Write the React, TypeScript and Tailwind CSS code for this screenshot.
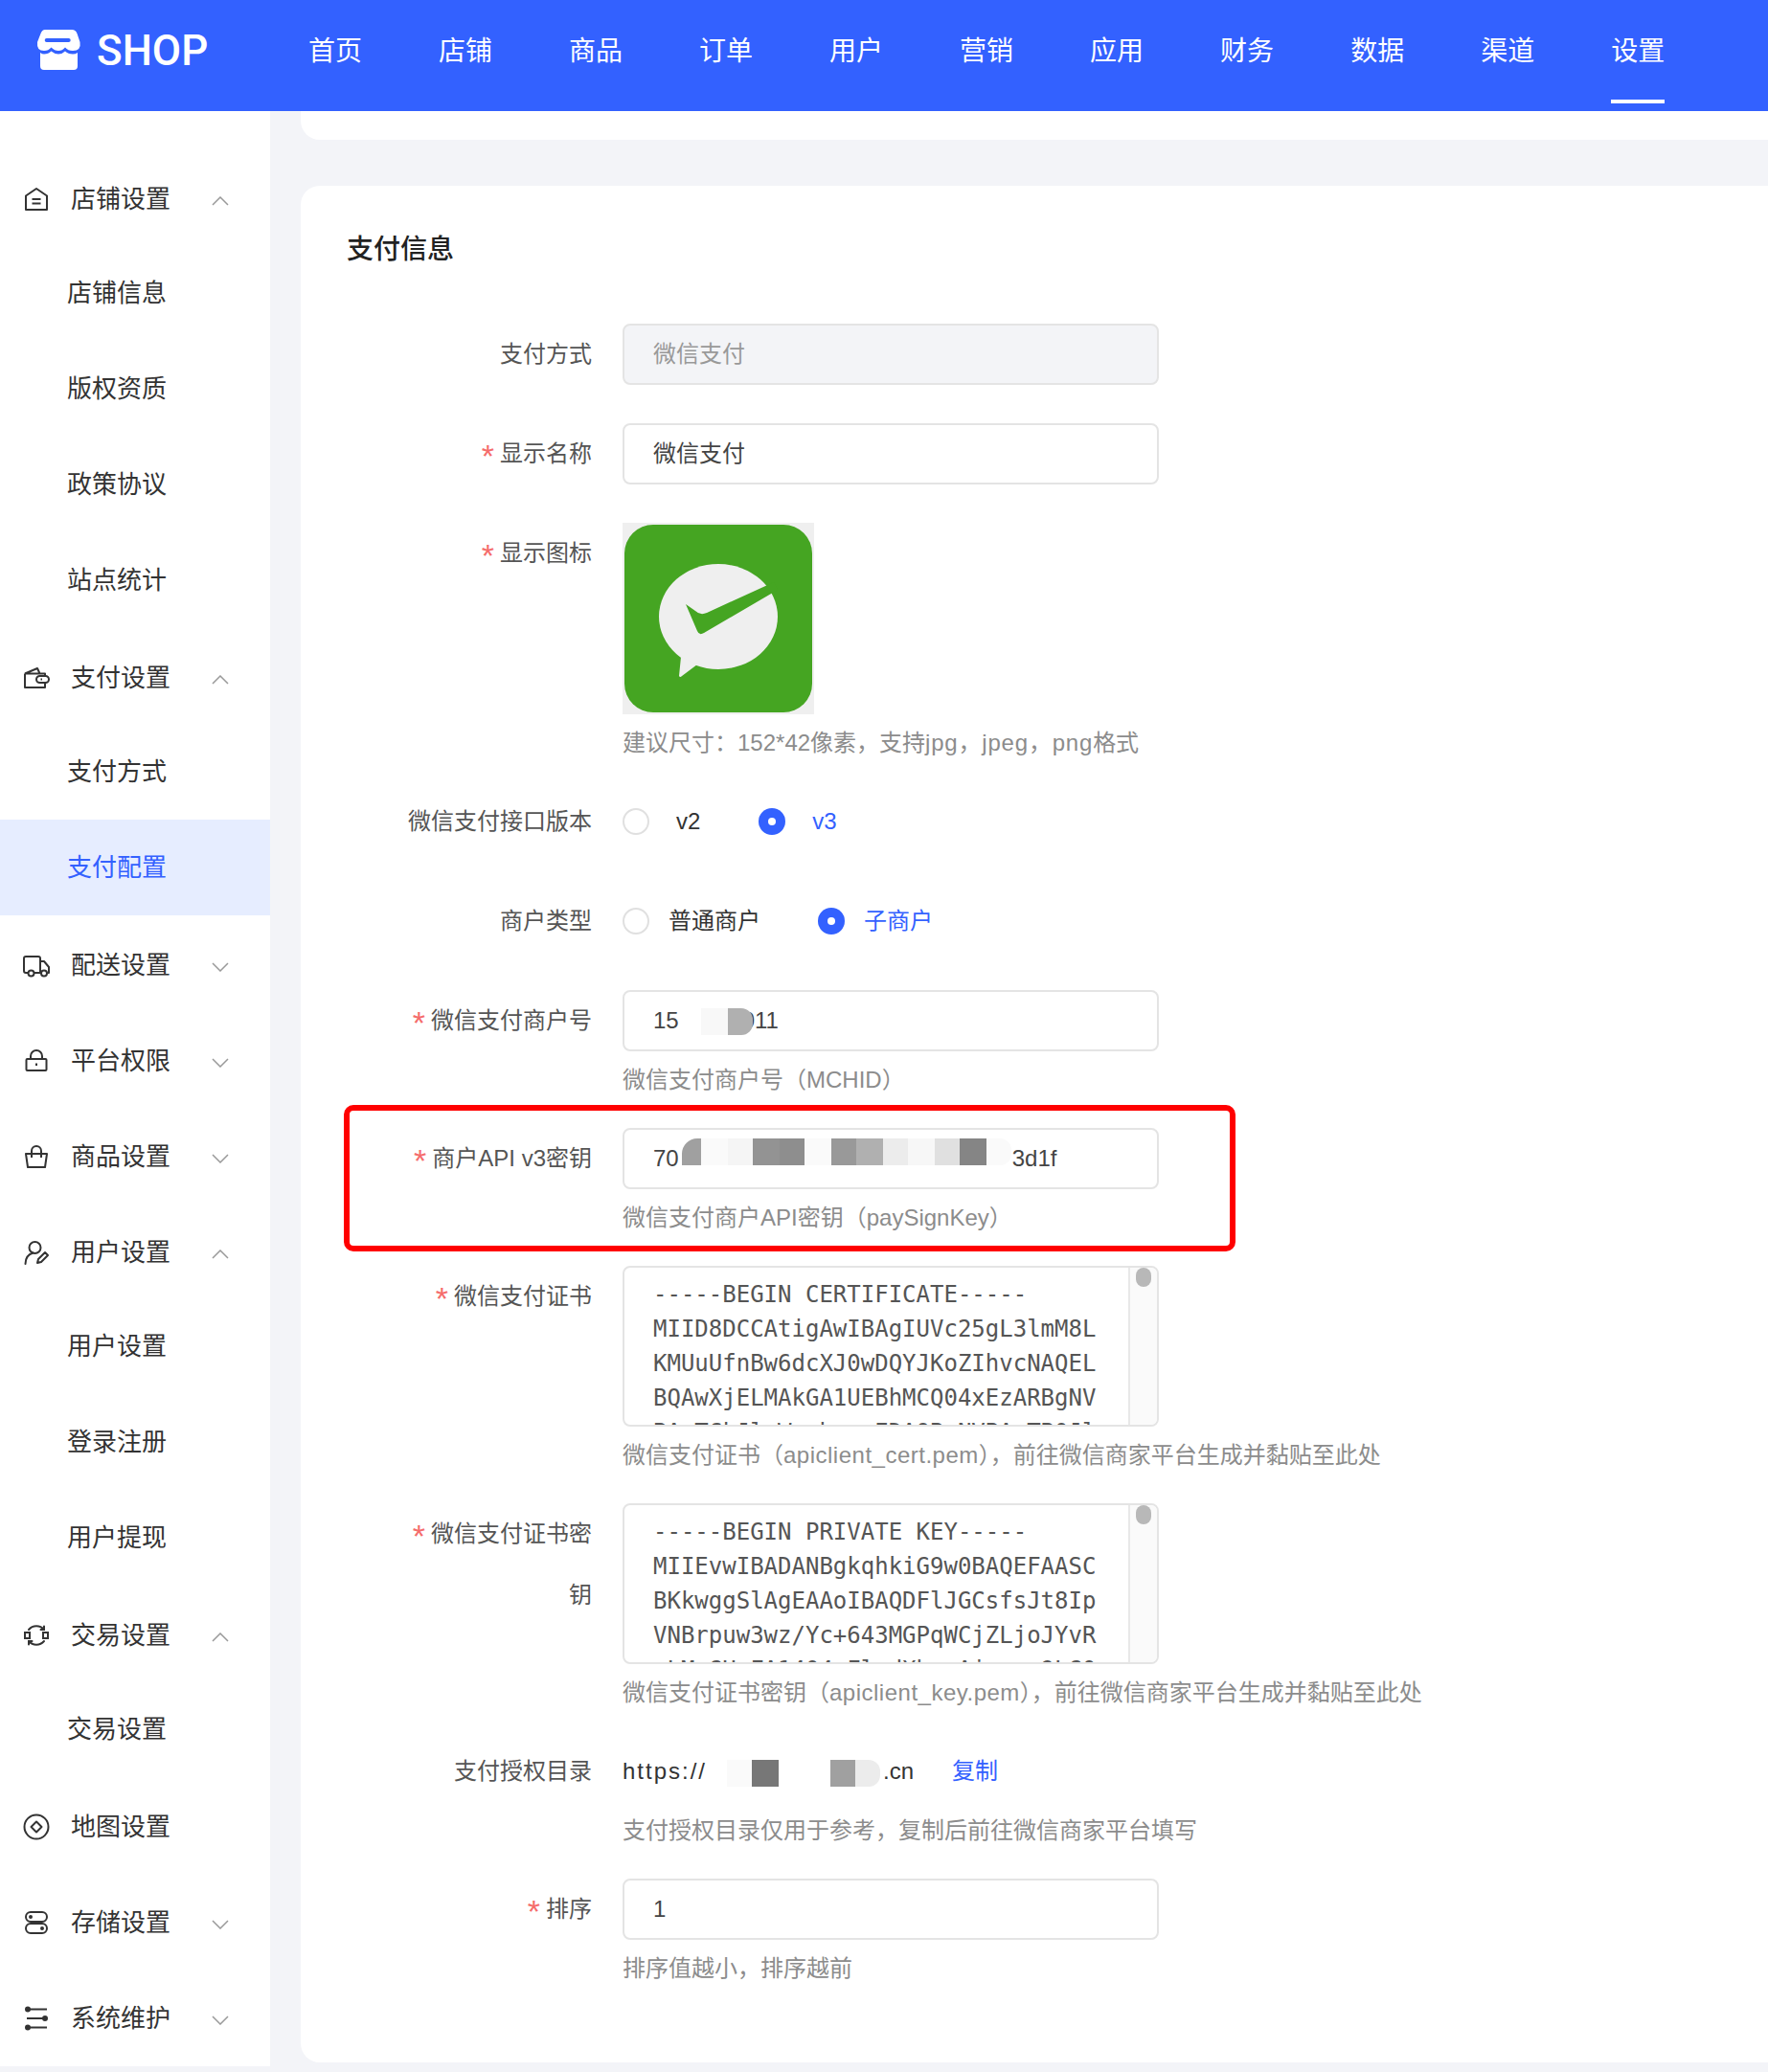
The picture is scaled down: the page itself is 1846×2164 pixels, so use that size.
import React from "react";

const navItems = ["首页", "店铺", "商品", "订单", "用户", "营销", "应用", "财务", "数据", "渠道", "设置"];

const icon = "w-7 h-7 shrink-0 fill-none stroke-[#333] stroke-2";

const HomeIcon = () => (
  <svg viewBox="0 0 28 28" className={icon} strokeLinejoin="round">
    <path d="M3 10.5 14 3l11 7.500V25H3Z" />
    <path d="M9.500 14h9M9.500 18.500h9" />
  </svg>
);
const WalletIcon = () => (
  <svg viewBox="0 0 28 28" className={icon} strokeLinejoin="round">
    <path d="M2 9.500V24h21v-5M2 9.500 15 4l2.500 5.500M2 9.500h21V12" />
    <rect x="14" y="12" width="13" height="7" rx="3.500" />
    <path d="M18.500 15.500h1.500" />
  </svg>
);
const TruckIcon = () => (
  <svg viewBox="0 0 28 28" className={icon} strokeLinejoin="round">
    <path d="M5 22H3a2 2 0 0 1-2-2V7a2 2 0 0 1 2-2h13a2 2 0 0 1 2 2v15h-6" />
    <path d="M18 10h4l5 6v6h-1.500M18 22h1" />
    <circle cx="8.500" cy="22.500" r="3" />
    <circle cx="22" cy="22.500" r="3" />
  </svg>
);
const LockIcon = () => (
  <svg viewBox="0 0 28 28" className={icon} strokeLinejoin="round">
    <rect x="3.500" y="12" width="21" height="12" rx="1" />
    <path d="M8 12V9a6 6 0 0 1 12 0v3" />
    <path d="M14 16.500v2.500" />
  </svg>
);
const BagIcon = () => (
  <svg viewBox="0 0 28 28" className={icon} strokeLinejoin="round">
    <path d="M3 11h22l-2 14H5Z" />
    <path d="M9 15V8a5 5 0 0 1 10 0v7" />
  </svg>
);
const UserIcon = () => (
  <svg viewBox="0 0 28 28" className={icon} strokeLinejoin="round" strokeLinecap="round">
    <circle cx="12.500" cy="9" r="6" />
    <path d="M2.500 26c0-6 3-10 8-11.500" />
    <path d="m15 25 1-4 7-7 3 3-7 7Z" />
  </svg>
);
const SwapIcon = () => (
  <svg viewBox="0 0 28 28" className={icon} strokeLinecap="round">
    <path d="M6 8a10.500 10.500 0 0 1 16 0M22 20a10.500 10.500 0 0 1-16 0" />
    <rect x="2" y="11" width="5" height="6" />
    <rect x="21" y="11" width="5" height="6" />
    <path d="M22 4.500V8h-3.500M6 23.500V20h3.500" />
  </svg>
);
const MapIcon = () => (
  <svg viewBox="0 0 28 28" className={icon} strokeLinejoin="round">
    <circle cx="14" cy="14" r="12.500" />
    <path d="m14 8.500 5.500 5.500-5.500 5.500L8.500 14Z" />
  </svg>
);
const StorageIcon = () => (
  <svg viewBox="0 0 28 28" className={icon}>
    <rect x="3" y="3" width="22" height="10" rx="5" />
    <rect x="3" y="15" width="22" height="10" rx="5" />
    <circle cx="8" cy="8" r="1" className="fill-[#333]" />
    <circle cx="20" cy="20" r="1" className="fill-[#333]" />
  </svg>
);
const SystemIcon = () => (
  <svg viewBox="0 0 28 28" className={icon}>
    <path d="M4 4.500h21M4 14h21M4 23.500h21" />
    <circle cx="5" cy="4.500" r="2" className="fill-[#333]" />
    <circle cx="23" cy="14" r="2" className="fill-[#333]" />
    <circle cx="5" cy="23.500" r="2" className="fill-[#333]" />
  </svg>
);

const Chevron = ({ up }: { up: boolean }) => (
  <svg viewBox="0 0 18 10" className="w-[18px] h-[10px] mt-[3px] fill-none stroke-[#999] stroke-[1.5]">
    <polyline points={up ? "1,9 9,1 17,9" : "1,1 9,9 17,1"} />
  </svg>
);

const menu = [
  { title: "店铺设置", icon: <HomeIcon />, open: true, subs: ["店铺信息", "版权资质", "政策协议", "站点统计"] },
  { title: "支付设置", icon: <WalletIcon />, open: true, subs: ["支付方式", "支付配置"] },
  { title: "配送设置", icon: <TruckIcon />, open: false, subs: [] },
  { title: "平台权限", icon: <LockIcon />, open: false, subs: [] },
  { title: "商品设置", icon: <BagIcon />, open: false, subs: [] },
  { title: "用户设置", icon: <UserIcon />, open: true, subs: ["用户设置", "登录注册", "用户提现"] },
  { title: "交易设置", icon: <SwapIcon />, open: true, subs: ["交易设置"] },
  { title: "地图设置", icon: <MapIcon />, open: null, subs: [] },
  { title: "存储设置", icon: <StorageIcon />, open: false, subs: [] },
  { title: "系统维护", icon: <SystemIcon />, open: false, subs: [] },
];

const Sidebar = () => (
  <aside className="w-[282px] shrink-0 bg-white pt-[42px] text-[26px] text-[#333]">
    {menu.map((group) => (
      <div key={group.title}>
        <div className="flex items-center h-[100px] pl-6">
          {group.icon}
          <span className="ml-[22px] w-[147px]">{group.title}</span>
          {group.open !== null && <Chevron up={group.open} />}
        </div>
        {group.subs.length > 0 && (
          <ul className="-mt-0.5 mb-0.5">
            {group.subs.map((sub) => (
              <li
                key={sub}
                className={
                  sub === "支付配置"
                    ? "h-[100px] leading-[100px] pl-[70px] bg-[#e6edff] text-[#3361ff]"
                    : "h-[100px] leading-[100px] pl-[70px]"
                }
              >
                {sub}
              </li>
            ))}
          </ul>
        )}
      </div>
    ))}
  </aside>
);

type FieldProps = {
  label: string;
  required?: boolean;
  hint?: React.ReactNode;
  children: React.ReactNode;
};

const Field = ({ label, required, hint, children }: FieldProps) => (
  <div className={hint ? "mb-8" : "mb-10"}>
    <div className="flex">
      <label className="w-[200px] mr-8 shrink-0 text-right leading-[64px] text-[#555]">
        {required && <span className="relative top-[6px] mr-1.5 text-[34px] leading-none text-[#f56c6c]">*</span>}
        {label}
      </label>
      <div className="flex-1">{children}</div>
    </div>
    {hint && <p className="ml-[232px] mt-3 leading-9 text-[#8c8c8c] whitespace-nowrap">{hint}</p>}
  </div>
);

const inputBox = "w-[560px] h-16 px-[30px] border-2 border-[#e4e4e4] rounded-lg text-[#444] outline-none";

const Radio = ({ checked }: { checked?: boolean }) =>
  checked ? (
    <span className="w-7 h-7 rounded-full bg-[#3361ff] flex items-center justify-center">
      <span className="w-2 h-2 rounded-full bg-white" />
    </span>
  ) : (
    <span className="w-7 h-7 rounded-full border-2 border-[#e0e0e0]" />
  );

const Mosaic = ({ className }: { className: string }) => <span className={`block h-full ${className}`} />;

const CodeBox = ({ lines }: { lines: string[] }) => (
  <div className="w-[560px] h-[168px] border-2 border-[#e4e4e4] rounded-lg flex overflow-hidden">
    <pre className="flex-1 pl-[30px] pt-2.5 font-['DejaVu_Sans_Mono',monospace] text-2xl leading-9 text-[#555] overflow-hidden">
      {lines.join("\n")}
    </pre>
    <div className="w-[30px] shrink-0 bg-[#fafafa] border-l-2 border-[#e8e8e8]">
      <div className="w-4 h-5 mx-auto rounded-full bg-[#b8b8b8]" />
    </div>
  </div>
);

const WechatLogo = () => (
  <svg viewBox="0 0 200 200" className="w-[200px] h-[200px] block">
    <rect width="200" height="200" fill="#efefef" />
    <rect x="2" y="2" width="196" height="196" rx="30" fill="#45a522" />
    <ellipse cx="100" cy="98" rx="62" ry="55" fill="#efefef" />
    <path d="M61 140 59 160 Q60 162 62 160L78 148Z" fill="#efefef" />
    <path d="M66 85 76 92Q81 97 88 94L158 62 162 70 85 115Q80 118 78 113Z" fill="#45a522" />
  </svg>
);

const PaymentForm = () => (
  <section className="bg-white rounded-l-[20px] pt-[47px] pb-12 pl-12 text-2xl">
    <h2 className="text-[28px] leading-10 font-medium text-[#222] mb-[57px]">支付信息</h2>
    <div className="ml-14">
      <Field label="支付方式">
        <input readOnly value="微信支付" className={`${inputBox} pb-[5px] bg-[#f3f4f7] text-[#999]`} />
      </Field>
      <Field label="显示名称" required>
        <input readOnly value="微信支付" className={`${inputBox} pb-[5px]`} />
      </Field>
      <Field
        label="显示图标"
        required
        hint={
          <>
            建议尺寸：152*42像素，支持<span className="tracking-[0.8px]">jpg，jpeg，png</span>格式
          </>
        }
      >
        <WechatLogo />
      </Field>
      <Field label="微信支付接口版本">
        <div className="flex items-center h-16">
          <Radio />
          <span className="ml-7 mr-[61px] text-[#333]">v2</span>
          <Radio checked />
          <span className="ml-7 text-[#3361ff]">v3</span>
        </div>
      </Field>
      <Field label="商户类型">
        <div className="flex items-center h-16">
          <Radio />
          <span className="ml-5 mr-[60px] text-[#333]">普通商户</span>
          <Radio checked />
          <span className="ml-5 text-[#3361ff]">子商户</span>
        </div>
      </Field>
      <Field label="微信支付商户号" required hint="微信支付商户号（MCHID）">
        <div className={`${inputBox} flex items-center`}>
          <span>15</span>
          <span className="flex h-[28px] mt-0.5 ml-[23px] relative z-10">
            <Mosaic className="w-7 bg-[#f8f8f8]" />
            <Mosaic className="w-[26px] bg-[#b0b0b0] rounded-r-xl" />
          </span>
          <span className="-ml-[11px]">011</span>
        </div>
      </Field>
      <div className="relative">
        <Field label="商户API v3密钥" required hint="微信支付商户API密钥（paySignKey）">
          <div className={`${inputBox} flex items-center`}>
            <span>70</span>
            <span className="flex h-7 ml-[3px] mb-3.5">
              <Mosaic className="w-5 bg-[#a0a0a0] rounded-tl-2xl" />
              <Mosaic className="w-7 bg-[#fafafa]" />
              <Mosaic className="w-[26px] bg-[#f5f5f5]" />
              <Mosaic className="w-7 bg-[#939393]" />
              <Mosaic className="w-[26px] bg-[#8e8e8e]" />
              <Mosaic className="w-7 bg-[#fafafa]" />
              <Mosaic className="w-[26px] bg-[#999999]" />
              <Mosaic className="w-7 bg-[#b0b0b0]" />
              <Mosaic className="w-[26px] bg-[#ececec]" />
              <Mosaic className="w-7 bg-[#f7f7f7]" />
              <Mosaic className="w-[26px] bg-[#e0e0e0]" />
              <Mosaic className="w-7 bg-[#858585]" />
              <Mosaic className="w-[26px] bg-[#fafafa] rounded-r-xl" />
            </span>
            <span className="ml-px">3d1f</span>
          </div>
        </Field>
        {/* 红框标注 */}
        <div className="absolute -left-[59px] -top-6 w-[931px] h-[153px] border-[6px] border-[#ff0000] rounded-[10px]" />
      </div>
      <Field
        label="微信支付证书"
        required
        hint={
          <>
            微信支付证书（<span className="tracking-[0.5px]">apiclient_cert.pem</span>），前往微信商家平台生成并黏贴至此处
          </>
        }
      >
        <CodeBox
          lines={[
            "-----BEGIN CERTIFICATE-----",
            "MIID8DCCAtigAwIBAgIUVc25gL3lmM8L",
            "KMUuUfnBw6dcXJ0wDQYJKoZIhvcNAQEL",
            "BQAwXjELMAkGA1UEBhMCQ04xEzARBgNV",
            "BAgTCkJlaWppbmcxEDAOBgNVBAcTB0Jl",
          ]}
        />
      </Field>
      <Field
        label="微信支付证书密钥"
        required
        hint={
          <>
            微信支付证书密钥（<span className="tracking-[0.5px]">apiclient_key.pem</span>），前往微信商家平台生成并黏贴至此处
          </>
        }
      >
        <CodeBox
          lines={[
            "-----BEGIN PRIVATE KEY-----",
            "MIIEvwIBADANBgkqhkiG9w0BAQEFAASC",
            "BKkwggSlAgEAAoIBAQDFlJGCsfsJt8Ip",
            "VNBrpuw3wz/Yc+643MGPqWCjZLjoJYvR",
            "pLMoGHyFA1404nFlrdXhzvAjxenc9LG0",
          ]}
        />
      </Field>
      <Field label="支付授权目录" hint="支付授权目录仅用于参考，复制后前往微信商家平台填写">
        <div className="flex items-center h-16 text-[#333]">
          <span className="tracking-[2px]">https://</span>
          <span className="flex h-7 mt-1 ml-[21px]">
            <Mosaic className="w-[26px] bg-[#fafafa]" />
            <Mosaic className="w-7 bg-[#777777]" />
            <Mosaic className="w-[54px] bg-white" />
            <Mosaic className="w-[26px] bg-[#a0a0a0]" />
            <Mosaic className="w-[26px] bg-[#ececec] rounded-r-xl" />
          </span>
          <span className="ml-[3px]">.cn</span>
          <a className="ml-10 text-[#3361ff]">复制</a>
        </div>
      </Field>
      <Field label="排序" required hint="排序值越小，排序越前">
        <input readOnly value="1" className={inputBox} />
      </Field>
    </div>
  </section>
);

export default function App() {
  return (
    <div className="w-[1846px] h-[2164px] overflow-hidden bg-[#f3f4f8] font-['Liberation_Sans','Noto_Sans_CJK_SC',sans-serif]">
      <header className="h-[116px] bg-[#3361ff] flex text-white">
        <div className="w-[322px] pl-[38px] pt-[30px] flex items-start">
          <svg viewBox="0 0 47 43" className="w-[47px] h-[43px] fill-white">
            <path d="M9 1H37Q41 1 42.500 5L45.500 14Q47 23 38 23 33 23 30 19.500 27 23 23 23 19 23 15.500 19.500 12.500 23 8 23 0 23 1 14L4.500 5Q6 1 9 1Z" />
            <rect x="8.700" y="10" width="27" height="4" rx="2" fill="#3361ff" />
            <path d="M4 25Q6 26.500 8 26.500 12.500 26.500 15.500 23.500 19 26.500 23 26.500 27 26.500 30 23.500 33 26.500 38 26.500 41 26.500 43 25V39Q43 43 39 43H8Q4 43 4 39Z" />
          </svg>
          <span className="ml-4 -mt-[3px] font-['Roboto',sans-serif] font-medium text-[44px] leading-[52px]">SHOP</span>
        </div>
        <nav className="flex gap-20 text-[28px]">
          {navItems.map((item) => (
            <a
              key={item}
              className={
                item === "设置"
                  ? "h-[108px] leading-[108px] border-b-4 border-white"
                  : "h-[108px] leading-[108px]"
              }
            >
              {item}
            </a>
          ))}
        </nav>
      </header>
      <div className="flex">
        <Sidebar />
        <main className="flex-1 pl-8">
          <div className="h-[30px] bg-white rounded-bl-[20px] mb-12" />
          <PaymentForm />
        </main>
      </div>
    </div>
  );
}
